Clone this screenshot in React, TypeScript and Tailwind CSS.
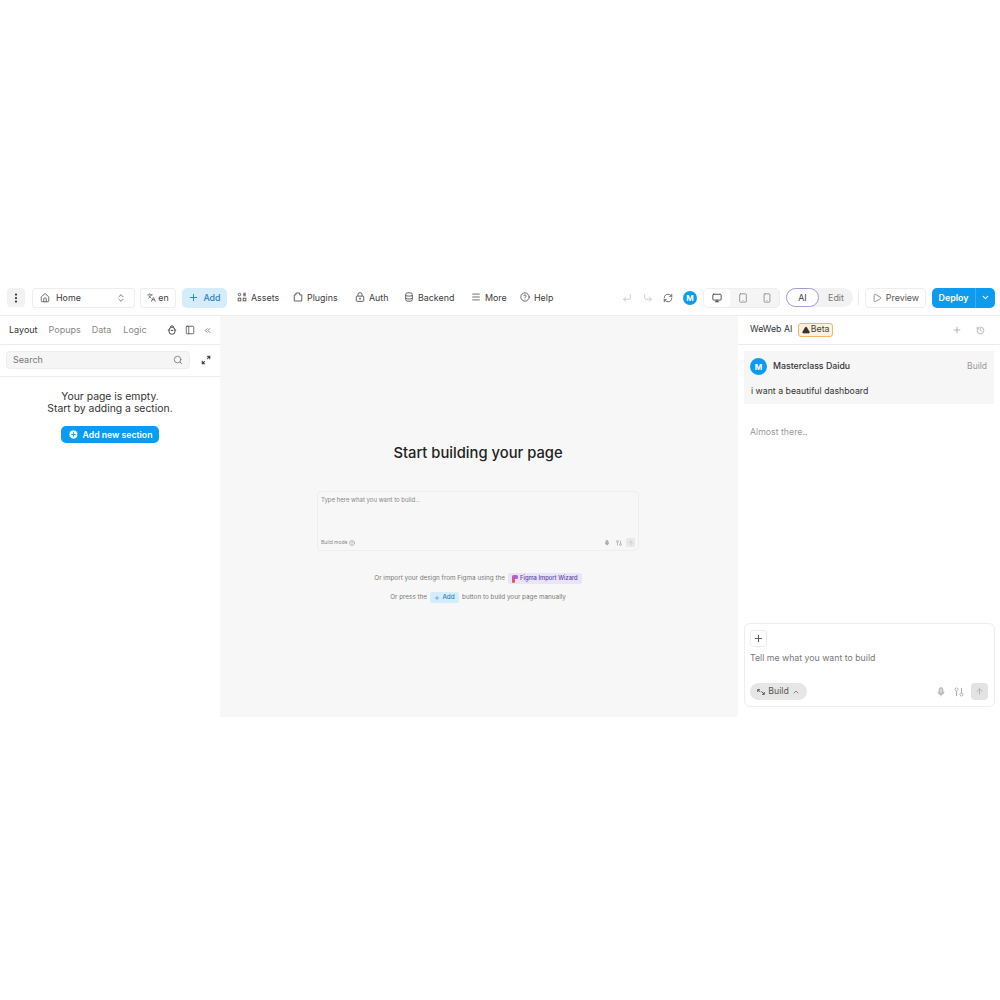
import {
  ArrowUp, ChevronDown, ChevronUp, ChevronsLeft, ChevronsUpDown, CirclePlus, CircleHelp, CornerDownLeft, CornerDownRight, History, House, Languages, Menu, Monitor, MoreVertical, PanelLeft, Play, Plus, RefreshCw, Search, Smartphone, Tablet, TriangleAlert,
} from 'lucide-react';

type IconProps = { size?: number; className?: string };

const AssetsIcon = ({ size = 10, className }: IconProps) => (
  <svg width={size} height={size} viewBox="0 0 12 12" fill="none" stroke="currentColor" strokeWidth="1.1" className={className}>
    <circle cx="3" cy="3" r="1.5" />
    <path d="M7.5 1.5h3M7.5 3h3M7.5 4.5h3" />
    <rect x="1.4" y="7.4" width="3.2" height="3.2" />
    <rect x="7.4" y="7.4" width="3.2" height="3.2" />
  </svg>
);

const PluginsIcon = ({ size = 10, className }: IconProps) => (
  <svg width={size} height={size} viewBox="0 0 12 12" fill="none" stroke="currentColor" strokeWidth="1.1" className={className}>
    <path d="M1.5 3.5h2V1.2h4.5v2.3h2.5v7.3h-9z" strokeLinejoin="round" />
  </svg>
);

const LockIcon = ({ size = 10, className }: IconProps) => (
  <svg width={size} height={size} viewBox="0 0 12 12" fill="none" stroke="currentColor" strokeWidth="1.1" className={className}>
    <rect x="1.5" y="5" width="9" height="6.2" rx="1" />
    <path d="M3.5 5V3.2a2.5 2.5 0 0 1 5 0V5" />
    <circle cx="6" cy="8" r=".6" fill="currentColor" />
  </svg>
);

const DatabaseIcon = ({ size = 10, className }: IconProps) => (
  <svg width={size} height={size} viewBox="0 0 12 12" fill="none" stroke="currentColor" strokeWidth="1.1" className={className}>
    <rect x="2" y="1" width="8" height="10" rx="2.2" />
    <path d="M2 4.2c1.5 1 6.5 1 8 0M2 7.6c1.5 1 6.5 1 8 0" />
  </svg>
);

const BugIcon = ({ size = 10, className }: IconProps) => (
  <svg width={size} height={size} viewBox="0 0 12 12" fill="none" stroke="currentColor" strokeWidth="1.2" className={className}>
    <rect x="2.5" y="3" width="7" height="8" rx="3" />
    <path d="M4 3a2 2 0 0 1 4 0M1 6h1.5M9.5 6H11M4.5 6.5h3" />
  </svg>
);

const ExpandIcon = ({ size = 10, className }: IconProps) => (
  <svg width={size} height={size} viewBox="0 0 12 12" fill="none" stroke="currentColor" strokeWidth="1.3" className={className}>
    <path d="M7 1.5h3.5V5M10.5 1.5 7.5 4.5M1.5 7v3.5H5M1.5 10.5l3-3" />
  </svg>
);

const MicIcon = ({ size = 10, className }: IconProps) => (
  <svg width={size} height={size} viewBox="0 0 12 12" fill="none" stroke="currentColor" strokeWidth="1" className={className}>
    <rect x="3.8" y=".8" width="4.4" height="7.4" rx="2.2" fill="currentColor" fillOpacity=".5" />
    <path d="M2.4 5.5a3.6 3.6 0 0 0 7.2 0M6 9.2v2" />
  </svg>
);

const TuneIcon = ({ size = 10, className }: IconProps) => (
  <svg width={size} height={size} viewBox="0 0 12 12" fill="none" stroke="currentColor" strokeWidth="1.1" className={className}>
    <circle cx="3" cy="3" r="1.8" />
    <path d="M3 5v6M9 1v6" />
    <circle cx="9" cy="9" r="1.8" />
  </svg>
);

const BuildIcon = ({ size = 8, className }: IconProps) => (
  <svg width={size} height={size} viewBox="0 0 12 12" fill="none" stroke="currentColor" strokeWidth="1.4" className={className}>
    <path d="M1 2.5 5 6M1 2.5V6M1 2.5h3.5M6.5 5l4.5 4.5M11 9.5H7.5M11 9.5V6" />
  </svg>
);

const navItems = [
  { label: 'Assets', icon: AssetsIcon, width: 'w-[56px]' },
  { label: 'Plugins', icon: PluginsIcon, width: 'w-[62px]' },
  { label: 'Auth', icon: LockIcon, width: 'w-[49px]' },
  { label: 'Backend', icon: DatabaseIcon, width: 'w-[67px]' },
  { label: 'More', icon: Menu, width: 'w-[49px]' },
  { label: 'Help', icon: CircleHelp, width: 'w-[40px]' },
];

const Header = () => (
  <header className="h-[33px] shrink-0 flex items-center border-b border-[#ececec] bg-white pl-[7px] pr-[5px] pb-[3px] text-[8.9px] text-[#3c3c3c]">
    <button className="w-[18px] h-[19px] rounded-[4px] bg-[#f2f2f2] flex items-center justify-center">
      <MoreVertical size={12} strokeWidth={2.5} className="text-[#333]" />
    </button>
    <div className="ml-[7px] w-[103px] h-[20px] rounded-[3px] border border-[#eeeeee] flex items-center pl-[7px] pr-[8px]">
      <House size={10} className="text-[#555]" />
      <span className="ml-[6px]">Home</span>
      <ChevronsUpDown size={10} className="ml-auto text-[#666]" />
    </div>
    <div className="ml-[5px] w-[36px] h-[20px] rounded-[3px] border border-[#eeeeee] flex items-center justify-center gap-[2px]">
      <Languages size={9} className="text-[#555]" />
      <span>en</span>
    </div>
    <button className="ml-[6px] w-[45px] h-[20px] rounded-[5px] bg-[#d5ecfb] text-[#2b7fc0] font-medium flex items-center justify-center gap-[4px]">
      <Plus size={11} />
      Add
    </button>
    <nav className="ml-[10px] flex items-center">
      {navItems.map(item => (
        <div key={item.label} className={`${item.width} flex items-center gap-[4px]`}>
          <item.icon size={10} className="text-[#555]" />
          <span>{item.label}</span>
        </div>
      ))}
    </nav>
    <div className="ml-auto flex items-center">
      <CornerDownLeft size={10} className="text-[#c4c4c4]" />
      <CornerDownRight size={10} className="ml-[11px] text-[#c4c4c4]" />
      <RefreshCw size={10} className="ml-[10px] text-[#555]" />
      <div className="ml-[10px] w-[14px] h-[14px] rounded-full bg-[#0d9bf0] text-white text-[8px] font-bold flex items-center justify-center">M</div>
      <div className="ml-[6px] w-[77px] h-[20px] rounded-[5px] border border-[#eeeeee] bg-[#f5f5f5] flex items-center">
        <div className="w-[26px] h-[18px] rounded-[4px] bg-white flex items-center justify-center">
          <Monitor size={10} className="text-[#333]" />
        </div>
        <div className="w-[25px] flex justify-center"><Tablet size={10} className="text-[#888]" /></div>
        <div className="w-[24px] flex justify-center"><Smartphone size={10} className="text-[#888]" /></div>
      </div>
      <div className="ml-[6px] w-[67px] h-[19px] rounded-full bg-[#f2f2f2] flex items-center">
        <div className="w-[33px] h-[19px] rounded-full border border-[#a79ad8] bg-white flex items-center justify-center">AI</div>
        <div className="flex-1 text-center text-[#777]">Edit</div>
      </div>
      <div className="ml-[5px] w-px h-[14px] bg-[#e8e8e8]" />
      <div className="ml-[6px] w-[61px] h-[20px] rounded-[4px] border border-[#eeeeee] flex items-center justify-center gap-[4px] text-[#555]">
        <Play size={10} strokeWidth={1.5} />
        Preview
      </div>
      <div className="ml-[6px] w-[63px] h-[20px] rounded-[5px] bg-[#0d9bf0] text-white font-semibold flex items-center">
        <span className="w-[43px] text-center">Deploy</span>
        <div className="flex-1 h-full border-l border-[#3aaef3] flex items-center justify-center">
          <ChevronDown size={9} strokeWidth={3} />
        </div>
      </div>
    </div>
  </header>
);

const Sidebar = () => (
  <aside className="w-[220px] shrink-0 bg-white text-[9px]">
    <div className="h-[29px] border-b border-[#ececec] flex items-center pl-[9px] pr-[8px]">
      <span className="text-[#333]">Layout</span>
      <span className="ml-[11px] text-[#888]">Popups</span>
      <span className="ml-[11px] text-[#888]">Data</span>
      <span className="ml-[12px] text-[#888]">Logic</span>
      <BugIcon size={10} className="ml-auto text-[#444]" />
      <PanelLeft size={10} className="ml-[8px] text-[#555]" />
      <ChevronsLeft size={9} className="ml-[8px] text-[#555]" />
    </div>
    <div className="h-[32px] pb-[2px] border-b border-[#ececec] flex items-center pl-[6px] pr-[9px]">
      <div className="w-[184px] h-[18px] rounded-[4px] bg-[#f5f5f5] border border-[#eeeeee] flex items-center px-[6px] text-[#777]">
        Search
        <Search size={10} className="ml-auto text-[#777]" />
      </div>
      <ExpandIcon size={10} className="ml-auto text-[#444]" />
    </div>
    <div className="pt-[14px] text-center text-[10.4px] leading-[12px] text-[#333]">
      <p>Your page is empty.</p>
      <p>Start by adding a section.</p>
      <button className="mt-[11px] mx-auto w-[98px] h-[17px] rounded-[5px] bg-[#0d9bf0] text-white text-[8.7px] font-semibold flex items-center justify-center gap-[4px]">
        <CirclePlus size={11} className="fill-white text-[#0d9bf0]" />
        Add new section
      </button>
    </div>
  </aside>
);

const Canvas = () => (
  <main className="flex-1 bg-[#f7f7f7] flex flex-col items-center pt-[127px] pr-[2px]">
    <h1 className="text-[14.75px] leading-[20px] font-medium text-[#222]">Start building your page</h1>
    <div className="mt-[28px] w-[322px] h-[60px] rounded-[4px] border border-[#eeeeee] flex flex-col px-[3px] py-[3px] text-[6px] text-[#888]">
      <span>Type here what you want to build...</span>
      <div className="mt-auto flex items-center">
        <span className="text-[5px]">Build mode</span>
        <CircleHelp size={6} className="ml-[2px]" />
        <MicIcon size={6} className="ml-auto" />
        <TuneIcon size={6} className="ml-[6px]" />
        <div className="ml-[4px] w-[9px] h-[9px] rounded-[2px] bg-[#e8e8e8] flex items-center justify-center">
          <ArrowUp size={6} className="text-[#bbb]" />
        </div>
      </div>
    </div>
    <div className="mt-[22px] flex items-center text-[6.35px] text-[#777]">
      Or import your design from Figma using the
      <span className="ml-[3px] h-[11px] px-[4px] rounded-[2px] bg-[#e9e4f8] text-[5.8px] text-[#5b45a8] font-medium flex items-center gap-[2px]">
        <svg width="6" height="8" viewBox="0 0 6 8">
          <rect width="6" height="4" rx="1.5" fill="#b25ee0" />
          <rect y="2.5" width="3" height="5.5" rx="1.5" fill="#e0566b" />
        </svg>
        Figma Import Wizard
      </span>
    </div>
    <div className="mt-[8px] flex items-center text-[6.35px] text-[#777]">
      Or press the
      <span className="mx-[3px] w-[29px] h-[11px] rounded-[2px] bg-[#d5ecfb] text-[#2b7fc0] font-medium flex items-center justify-center gap-[2px]">
        <Plus size={6} />
        Add
      </span>
      button to build your page manually
    </div>
  </main>
);

const ChatPanel = () => (
  <aside className="w-[262px] shrink-0 bg-white flex flex-col text-[8.75px]">
    <div className="h-[29px] border-b border-[#ececec] flex items-center pl-[12px] pr-[15px]">
      <span className="text-[#333]">WeWeb AI</span>
      <span className="ml-[6px] h-[14px] px-[2.5px] rounded-[3px] border border-[#f2b56b] bg-[#fdf0de] text-[#444] flex items-center gap-[1px]">
        <TriangleAlert size={8} className="fill-[#333] text-[#333]" />
        Beta
      </span>
      <Plus size={10} className="ml-auto text-[#aaa]" />
      <History size={9} className="ml-[14px] text-[#aaa]" />
    </div>
    <div className="mt-[6px] ml-[6px] w-[250px] h-[53px] bg-[#f6f6f6] pl-[6px] pr-[7px] pt-[7px]">
      <div className="flex items-center">
        <div className="w-[17px] h-[17px] rounded-full bg-[#0d9bf0] text-white text-[8px] font-bold flex items-center justify-center">M</div>
        <span className="ml-[6px] font-medium text-[#333]">Masterclass Daidu</span>
        <span className="ml-auto text-[8.5px] text-[#999]">Build</span>
      </div>
      <p className="mt-[10px] ml-[1px] text-[#333]">i want a beautiful dashboard</p>
    </div>
    <p className="mt-[22px] ml-[12px] text-[#999]">Almost there..</p>
    <div className="mt-auto mb-[10px] ml-[6px] w-[251px] h-[84px] rounded-[6px] border border-[#eeeeee] flex flex-col pl-[5px] pr-[6px] pt-[6px] pb-[6px]">
      <div className="w-[17px] h-[17px] rounded-[3px] border border-[#eeeeee] flex items-center justify-center">
        <Plus size={11} className="text-[#555]" />
      </div>
      <p className="mt-[5px] text-[#777]">Tell me what you want to build</p>
      <div className="mt-auto flex items-center">
        <div className="w-[57px] h-[17px] rounded-full bg-[#e6e6e6] text-[#555] flex items-center justify-center gap-[3px]">
          <BuildIcon size={8} />
          Build
          <ChevronUp size={8} />
        </div>
        <MicIcon size={10} className="ml-auto text-[#aaa]" />
        <TuneIcon size={10} className="ml-[8px] text-[#aaa]" />
        <div className="ml-[7px] w-[17px] h-[17px] rounded-[4px] bg-[#e3e3e3] flex items-center justify-center">
          <ArrowUp size={9} className="text-[#aaa]" />
        </div>
      </div>
    </div>
  </aside>
);

export default function App() {
  return (
    <div className="h-screen bg-white flex flex-col justify-center font-['Inter',sans-serif]">
      <div className="h-[434px] flex flex-col">
        <Header />
        <div className="flex-1 min-h-0 flex">
          <Sidebar />
          <Canvas />
          <ChatPanel />
        </div>
      </div>
    </div>
  );
}
